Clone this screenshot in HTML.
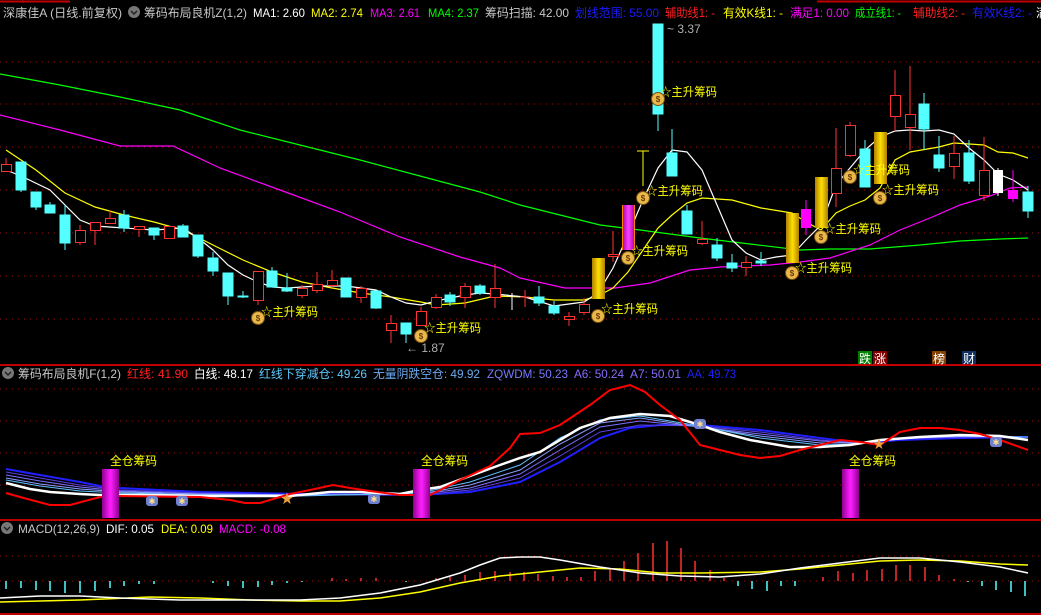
<!DOCTYPE html>
<html><head><meta charset="utf-8"><style>
html,body{margin:0;padding:0;background:#000;width:1041px;height:615px;overflow:hidden}
svg{display:block}
text{font-family:"Liberation Sans","Noto Sans CJK SC",sans-serif}
</style></head><body>
<svg width="1041" height="615" viewBox="0 0 1041 615" xmlns="http://www.w3.org/2000/svg">
<rect width="1041" height="615" fill="#000"/>
<line x1="0" y1="1.5" x2="70" y2="1.5" stroke="#c00000" stroke-width="2"/>
<line x1="23" y1="0" x2="23" y2="3" stroke="#c00000"/>
<line x1="817" y1="1.5" x2="1041" y2="1.5" stroke="#c00000" stroke-width="2"/>
<line x1="0" y1="365" x2="1041" y2="365" stroke="#c00000" stroke-width="2"/>
<line x1="0" y1="520" x2="1041" y2="520" stroke="#c00000" stroke-width="2"/>
<line x1="0" y1="614" x2="1041" y2="614" stroke="#c00000" stroke-width="2"/>
<g stroke="#a01010" stroke-dasharray="1,5" stroke-width="1">
<line x1="0" y1="62" x2="1041" y2="62"/><line x1="0" y1="104" x2="1041" y2="104"/>
<line x1="0" y1="147" x2="1041" y2="147"/><line x1="0" y1="190" x2="1041" y2="190"/>
<line x1="0" y1="233" x2="1041" y2="233"/><line x1="0" y1="276" x2="1041" y2="276"/>
<line x1="0" y1="319" x2="1041" y2="319"/>
<line x1="0" y1="389" x2="1041" y2="389"/><line x1="0" y1="421" x2="1041" y2="421"/>
<line x1="0" y1="453" x2="1041" y2="453"/><line x1="0" y1="485" x2="1041" y2="485"/>
<line x1="0" y1="556" x2="1041" y2="556"/><line x1="0" y1="581" x2="1041" y2="581"/>
</g>
<g font-size="12">
<text x="3" y="17" fill="#c8c8c8" textLength="119" lengthAdjust="spacingAndGlyphs">深康佳A (日线.前复权)</text>
<circle cx="134" cy="12" r="6" fill="#777"/><path d="M131 11 l3 3 l3 -3" stroke="#222" fill="none" stroke-width="1.5"/>
<text x="144" y="17" fill="#c8c8c8" textLength="103" lengthAdjust="spacingAndGlyphs">筹码布局良机Z(1,2)</text>
<text x="253" y="17" fill="#fff" textLength="52" lengthAdjust="spacingAndGlyphs">MA1: 2.60</text>
<text x="311" y="17" fill="#ffff00" textLength="52" lengthAdjust="spacingAndGlyphs">MA2: 2.74</text>
<text x="370" y="17" fill="#ff00ff" textLength="50" lengthAdjust="spacingAndGlyphs">MA3: 2.61</text>
<text x="428" y="17" fill="#00ff00" textLength="51" lengthAdjust="spacingAndGlyphs">MA4: 2.37</text>
<text x="485" y="17" fill="#c8c8c8" textLength="84" lengthAdjust="spacingAndGlyphs">筹码扫描: 42.00</text>
<text x="575" y="17" fill="#1c1cff" textLength="84" lengthAdjust="spacingAndGlyphs">划线范围: 55.00</text>
<text x="665" y="17" fill="#ff2020" textLength="50" lengthAdjust="spacingAndGlyphs">辅助线1: -</text>
<text x="723" y="17" fill="#ffff00" textLength="60" lengthAdjust="spacingAndGlyphs">有效K线1: -</text>
<text x="790" y="17" fill="#ff00ff" textLength="59" lengthAdjust="spacingAndGlyphs">满足1: 0.00</text>
<text x="855" y="17" fill="#00ff00" textLength="46" lengthAdjust="spacingAndGlyphs">成立线1: -</text>
<text x="913" y="17" fill="#ff2020" textLength="52" lengthAdjust="spacingAndGlyphs">辅助线2: -</text>
<text x="972" y="17" fill="#1c1cff" textLength="60" lengthAdjust="spacingAndGlyphs">有效K线2: -</text>
<text x="1036" y="17" fill="#fff">满</text>
</g>
<g font-size="12">
<circle cx="8" cy="373" r="6" fill="#777"/><path d="M5 372 l3 3 l3 -3" stroke="#222" fill="none" stroke-width="1.5"/>
<text x="18" y="378" fill="#c8c8c8" textLength="103" lengthAdjust="spacingAndGlyphs">筹码布局良机F(1,2)</text>
<text x="127" y="378" fill="#ff2020" textLength="61" lengthAdjust="spacingAndGlyphs">红线: 41.90</text>
<text x="194" y="378" fill="#fff" textLength="59" lengthAdjust="spacingAndGlyphs">白线: 48.17</text>
<text x="259" y="378" fill="#5fc8ff" textLength="108" lengthAdjust="spacingAndGlyphs">红线下穿减仓: 49.26</text>
<text x="373" y="378" fill="#6aaaf0" textLength="107" lengthAdjust="spacingAndGlyphs">无量阴跌空仓: 49.92</text>
<text x="487" y="378" fill="#7878ff" textLength="81" lengthAdjust="spacingAndGlyphs">ZQWDM: 50.23</text>
<text x="574" y="378" fill="#8a6cff" textLength="50" lengthAdjust="spacingAndGlyphs">A6: 50.24</text>
<text x="630" y="378" fill="#8a6cff" textLength="51" lengthAdjust="spacingAndGlyphs">A7: 50.01</text>
<text x="687" y="378" fill="#2020ff" textLength="49" lengthAdjust="spacingAndGlyphs">AA: 49.73</text>
</g>
<g font-size="12">
<circle cx="7" cy="528" r="6" fill="#777"/><path d="M4 527 l3 3 l3 -3" stroke="#222" fill="none" stroke-width="1.5"/>
<text x="18" y="533" fill="#c8c8c8" textLength="82" lengthAdjust="spacingAndGlyphs">MACD(12,26,9)</text>
<text x="106" y="533" fill="#fff" textLength="48" lengthAdjust="spacingAndGlyphs">DIF: 0.05</text>
<text x="161" y="533" fill="#ffff00" textLength="52" lengthAdjust="spacingAndGlyphs">DEA: 0.09</text>
<text x="219" y="533" fill="#ff00ff" textLength="67" lengthAdjust="spacingAndGlyphs">MACD: -0.08</text>
</g>

<g fill="none" stroke-width="1.2">
<polyline stroke="#00ff00" points="0,74 60,85 120,97 180,110 240,130 300,145 360,160 420,176 480,192 520,205 560,215 600,225 640,230 700,238 750,244 800,250 830,249 870,249 920,245 960,241 1000,239 1028,238"/>
<polyline stroke="#ff00ff" points="0,115 60,130 120,146 173,146 220,168 280,190 340,212 400,237 460,257 500,268 520,278 565,288 615,288 650,283 690,270 720,267 770,265 800,262 830,258 870,245 900,230 930,218 960,205 990,196 1010,188 1028,187"/>
<polyline stroke="#ffff00" points="6,150 36,170 65,193 95,207 124,215 154,222 183,230 213,245 243,260 272,272 302,282 332,288 361,293 391,297 421,302 436,305 465,303 495,296 525,297 554,300 584,300 598,296 613,288 628,272 643,250 658,228 672,215 687,203 702,198 732,200 761,208 792,213 806,222 821,230 836,213 850,206 865,200 880,188 895,160 910,152 939,147 954,143 984,145 998,152 1013,153 1028,158"/>
<polyline stroke="#ffffff" points="6,170 21,176 50,190 80,220 95,226 124,228 154,230 183,228 198,238 213,250 228,265 243,275 258,282 272,287 287,288 317,286 346,286 376,290 391,297 406,303 421,305 436,301 465,295 480,293 495,294 525,297 554,306 584,302 598,293 613,268 628,235 643,200 658,168 672,150 687,152 702,170 717,205 732,240 746,253 761,260 776,257 792,255 806,240 821,225 836,185 850,168 865,150 880,137 895,131 910,130 924,131 939,130 954,134 969,148 984,160 998,174 1013,180 1028,190"/>
</g>

<defs>
<linearGradient id="gold" x1="0" x2="1"><stop offset="0" stop-color="#b08000"/><stop offset=".5" stop-color="#ffe000"/><stop offset="1" stop-color="#b08000"/></linearGradient>
<linearGradient id="mag" x1="0" x2="1"><stop offset="0" stop-color="#a000a0"/><stop offset=".5" stop-color="#ff40ff"/><stop offset="1" stop-color="#a000a0"/></linearGradient>
</defs>
<g stroke-width="1">
<g stroke="#54ffff" fill="#54ffff">
<line x1="21" y1="162" x2="21" y2="192"/><rect x="16" y="162" width="10" height="28"/>
<line x1="36" y1="192" x2="36" y2="210"/><rect x="31" y="192" width="10" height="15"/>
<line x1="50" y1="202" x2="50" y2="213"/><rect x="45" y="205" width="10" height="8"/>
<line x1="65" y1="205" x2="65" y2="250"/><rect x="60" y="215" width="10" height="28"/>
<line x1="124" y1="210" x2="124" y2="232"/><rect x="119" y="215" width="10" height="13"/>
<line x1="154" y1="228" x2="154" y2="240"/><rect x="149" y="228" width="10" height="7"/>
<line x1="183" y1="224" x2="183" y2="237"/><rect x="178" y="226" width="10" height="11"/>
<line x1="198" y1="235" x2="198" y2="258"/><rect x="193" y="235" width="10" height="21"/>
<line x1="213" y1="252" x2="213" y2="276"/><rect x="208" y="258" width="10" height="13"/>
<line x1="228" y1="273" x2="228" y2="305"/><rect x="223" y="273" width="10" height="23"/>
<line x1="243" y1="291" x2="243" y2="298"/><rect x="238" y="296" width="10" height="1"/>
<line x1="272" y1="267" x2="272" y2="287"/><rect x="267" y="271" width="10" height="16"/>
<line x1="287" y1="273" x2="287" y2="292"/><rect x="282" y="288" width="10" height="3"/>
<line x1="346" y1="278" x2="346" y2="297"/><rect x="341" y="278" width="10" height="19"/>
<line x1="376" y1="291" x2="376" y2="309"/><rect x="371" y="291" width="10" height="17"/>
<line x1="406" y1="323" x2="406" y2="343"/><rect x="401" y="323" width="10" height="11"/>
<line x1="450" y1="292" x2="450" y2="306"/><rect x="445" y="295" width="10" height="7"/>
<line x1="480" y1="284" x2="480" y2="295"/><rect x="475" y="286" width="10" height="7"/>
<line x1="539" y1="286" x2="539" y2="306"/><rect x="534" y="297" width="10" height="6"/>
<line x1="554" y1="301" x2="554" y2="315"/><rect x="549" y="306" width="10" height="7"/>
<line x1="658" y1="24" x2="658" y2="131"/><rect x="653" y="24" width="10" height="90"/>
<line x1="672" y1="129" x2="672" y2="176"/><rect x="667" y="153" width="10" height="23"/>
<line x1="687" y1="205" x2="687" y2="234"/><rect x="682" y="211" width="10" height="23"/>
<line x1="717" y1="238" x2="717" y2="261"/><rect x="712" y="245" width="10" height="13"/>
<line x1="732" y1="254" x2="732" y2="272"/><rect x="727" y="263" width="10" height="5"/>
<line x1="761" y1="252" x2="761" y2="266"/><rect x="756" y="261" width="10" height="2"/>
<line x1="865" y1="140" x2="865" y2="187"/><rect x="860" y="149" width="10" height="38"/>
<line x1="924" y1="93" x2="924" y2="150"/><rect x="919" y="104" width="10" height="25"/>
<line x1="939" y1="136" x2="939" y2="172"/><rect x="934" y="155" width="10" height="13"/>
<line x1="969" y1="140" x2="969" y2="184"/><rect x="964" y="153" width="10" height="28"/>
<line x1="1028" y1="186" x2="1028" y2="218"/><rect x="1023" y="192" width="10" height="19"/>
</g>
<g stroke="#ff3232" fill="#000">
<line x1="6" y1="158" x2="6" y2="172"/><rect x="1.5" y="164.5" width="10" height="7"/>
<line x1="80" y1="225" x2="80" y2="245"/><rect x="75.5" y="230.5" width="10" height="12"/>
<line x1="95" y1="222" x2="95" y2="245"/><rect x="90.5" y="222.5" width="10" height="8"/>
<line x1="110" y1="210" x2="110" y2="223"/><rect x="105.5" y="218.5" width="10" height="5"/>
<line x1="139" y1="226" x2="139" y2="237"/><rect x="134.5" y="226.5" width="10" height="3"/>
<line x1="169" y1="226" x2="169" y2="238"/><rect x="164.5" y="226.5" width="10" height="12"/>
<line x1="258" y1="271" x2="258" y2="305"/><rect x="253.5" y="271.5" width="10" height="29"/>
<line x1="302" y1="285" x2="302" y2="298"/><rect x="297.5" y="288.5" width="10" height="7"/>
<line x1="317" y1="272" x2="317" y2="293"/><rect x="312.5" y="284.5" width="10" height="6"/>
<line x1="332" y1="270" x2="332" y2="287"/><rect x="327.5" y="280.5" width="10" height="5"/>
<line x1="361" y1="286" x2="361" y2="303"/><rect x="356.5" y="288.5" width="10" height="9"/>
<line x1="391" y1="315" x2="391" y2="343"/><rect x="386.5" y="323.5" width="10" height="7"/>
<line x1="421" y1="307" x2="421" y2="325"/><rect x="416.5" y="311.5" width="10" height="14"/>
<line x1="436" y1="294" x2="436" y2="309"/><rect x="431.5" y="297.5" width="10" height="10"/>
<line x1="465" y1="283" x2="465" y2="308"/><rect x="460.5" y="286.5" width="10" height="11"/>
<line x1="495" y1="264" x2="495" y2="308"/><rect x="490.5" y="288.5" width="10" height="9"/>
<line x1="569" y1="312" x2="569" y2="326"/><rect x="564.5" y="316.5" width="10" height="3"/>
<line x1="584" y1="298" x2="584" y2="315"/><rect x="579.5" y="304.5" width="10" height="8"/>
<line x1="613" y1="231" x2="613" y2="262"/><rect x="608.5" y="254.5" width="10" height="2"/>
<line x1="702" y1="221" x2="702" y2="245"/><rect x="697.5" y="239.5" width="10" height="4"/>
<line x1="746" y1="256" x2="746" y2="276"/><rect x="741.5" y="262.5" width="10" height="5"/>
<line x1="836" y1="128" x2="836" y2="207"/><rect x="831.5" y="168.5" width="10" height="25"/>
<line x1="850" y1="122" x2="850" y2="157"/><rect x="845.5" y="125.5" width="10" height="30"/>
<line x1="895" y1="70" x2="895" y2="131"/><rect x="890.5" y="95.5" width="10" height="21"/>
<line x1="910" y1="66" x2="910" y2="150"/><rect x="905.5" y="114.5" width="10" height="13"/>
<line x1="954" y1="136" x2="954" y2="179"/><rect x="949.5" y="153.5" width="10" height="13"/>
<line x1="984" y1="137" x2="984" y2="201"/><rect x="979.5" y="170.5" width="10" height="25"/>
</g>
<g stroke="#ff3232"><line x1="525" y1="290" x2="525" y2="307"/><line x1="520" y1="297" x2="530" y2="297"/></g>
<g stroke="#fff"><line x1="512" y1="293" x2="512" y2="310"/><line x1="507" y1="296" x2="517" y2="296"/></g>
<g stroke="#ffff00"><line x1="643" y1="151" x2="643" y2="186"/><line x1="637" y1="151" x2="649" y2="151"/></g>
<rect x="592" y="258" width="13" height="41" fill="url(#gold)"/>
<rect x="622" y="205" width="13" height="45" fill="url(#mag)"/>
<rect x="622" y="205" width="1" height="45" fill="#ff8000"/><rect x="634" y="205" width="1" height="45" fill="#ff8000"/>
<rect x="786" y="213" width="13" height="50" fill="url(#gold)"/>
<line x1="806" y1="200" x2="806" y2="235" stroke="#ff00ff"/><rect x="801" y="209" width="10" height="19" fill="#ff00ff"/>
<rect x="815" y="177" width="13" height="51" fill="url(#gold)"/>
<rect x="874" y="132" width="13" height="52" fill="url(#gold)"/>
<line x1="998" y1="168" x2="998" y2="196" stroke="#fff"/><rect x="993" y="170" width="10" height="23" fill="#fff"/>
<line x1="1013" y1="170" x2="1013" y2="202" stroke="#ff00ff"/><rect x="1008" y="190" width="10" height="9" fill="#ff00ff"/>
</g>
<text x="667" y="33" font-size="12" fill="#b0b0b0">~ 3.37</text>
<text x="406" y="352" font-size="12" fill="#b0b0b0">← 1.87</text>

<g font-size="12" fill="#ffff00">
<text x="261" y="316" textLength="57" lengthAdjust="spacingAndGlyphs">☆主升筹码</text>
<text x="424" y="332" textLength="57" lengthAdjust="spacingAndGlyphs">☆主升筹码</text>
<text x="601" y="313" textLength="57" lengthAdjust="spacingAndGlyphs">☆主升筹码</text>
<text x="631" y="255" textLength="57" lengthAdjust="spacingAndGlyphs">☆主升筹码</text>
<text x="646" y="195" textLength="57" lengthAdjust="spacingAndGlyphs">☆主升筹码</text>
<text x="660" y="96" textLength="57" lengthAdjust="spacingAndGlyphs">☆主升筹码</text>
<text x="795" y="272" textLength="57" lengthAdjust="spacingAndGlyphs">☆主升筹码</text>
<text x="824" y="233" textLength="57" lengthAdjust="spacingAndGlyphs">☆主升筹码</text>
<text x="853" y="174" textLength="57" lengthAdjust="spacingAndGlyphs">☆主升筹码</text>
<text x="882" y="194" textLength="57" lengthAdjust="spacingAndGlyphs">☆主升筹码</text>
</g>
<g font-size="8" font-weight="bold" text-anchor="middle">
<g><circle cx="258" cy="318" r="6.5" fill="#e8b84a" stroke="#7a5010"/><text x="258" y="321" fill="#6a3a00">$</text></g>
<g><circle cx="421" cy="336" r="6.5" fill="#e8b84a" stroke="#7a5010"/><text x="421" y="339" fill="#6a3a00">$</text></g>
<g><circle cx="598" cy="316" r="6.5" fill="#e8b84a" stroke="#7a5010"/><text x="598" y="319" fill="#6a3a00">$</text></g>
<g><circle cx="628" cy="258" r="6.5" fill="#e8b84a" stroke="#7a5010"/><text x="628" y="261" fill="#6a3a00">$</text></g>
<g><circle cx="643" cy="198" r="6.5" fill="#e8b84a" stroke="#7a5010"/><text x="643" y="201" fill="#6a3a00">$</text></g>
<g><circle cx="658" cy="99" r="6.5" fill="#e8b84a" stroke="#7a5010"/><text x="658" y="102" fill="#6a3a00">$</text></g>
<g><circle cx="792" cy="273" r="6.5" fill="#e8b84a" stroke="#7a5010"/><text x="792" y="276" fill="#6a3a00">$</text></g>
<g><circle cx="821" cy="237" r="6.5" fill="#e8b84a" stroke="#7a5010"/><text x="821" y="240" fill="#6a3a00">$</text></g>
<g><circle cx="850" cy="177" r="6.5" fill="#e8b84a" stroke="#7a5010"/><text x="850" y="180" fill="#6a3a00">$</text></g>
<g><circle cx="880" cy="198" r="6.5" fill="#e8b84a" stroke="#7a5010"/><text x="880" y="201" fill="#6a3a00">$</text></g>
</g>
<g font-size="12" fill="#fff">
<rect x="858" y="351" width="14" height="13" fill="#008000"/><text x="859" y="363">跌</text>
<rect x="873" y="351" width="14" height="13" fill="#800000"/><text x="874" y="363">涨</text>
<rect x="932" y="351" width="14" height="13" fill="#804000"/><text x="933" y="363">榜</text>
<rect x="962" y="351" width="14" height="13" fill="#103060"/><text x="963" y="363">财</text>
</g>

<g fill="none">
<polyline stroke="#2020ff" stroke-width="2" points="6,469 40,475 80,482 100,486 120,488 200,492 300,494 420,495 470,492 520,482 560,462 600,438 630,428 660,425 700,425 760,430 820,438 860,443 900,440 960,438 1028,437"/>
<polyline stroke="#5a40e0" stroke-width="1" points="6,472 40,478 80,485 120,490 200,493 300,495 420,495 470,490 520,478 560,456 600,432 640,425 700,426 760,432 820,440 860,443 900,439 960,437 1028,437"/>
<polyline stroke="#7a70ff" stroke-width="1" points="6,475 40,481 80,487 120,491 200,494 300,495 420,494 470,488 520,474 560,450 600,427 640,421 700,427 760,434 820,441 860,443 900,438 960,437 1028,437"/>
<polyline stroke="#8aa0ff" stroke-width="1" points="6,478 40,484 80,489 120,492 200,494 300,495 420,494 470,485 520,470 560,444 600,423 640,418 700,427 760,436 820,443 860,443 900,438 960,436 1028,437"/>
<polyline stroke="#60c0ff" stroke-width="1" points="6,480 40,486 80,491 120,493 200,495 300,496 420,493 470,482 520,465 560,438 600,420 640,416 700,426 760,438 820,445 860,444 900,438 960,436 1028,437"/>
<polyline stroke="#ffffff" stroke-width="2.5" points="6,483 30,489 50,492 80,494 100,495 150,495 200,496 250,496 290,496 330,492 360,492 400,494 420,490 440,487 470,476 500,465 520,458 540,452 580,428 610,418 640,414 670,416 700,425 720,432 750,440 790,447 820,447 850,445 880,440 920,437 960,435 1000,436 1028,440"/>
<polyline stroke="#ff0000" stroke-width="2" points="6,493 20,497 50,505 70,505 100,497 120,496 200,497 230,500 245,503 260,503 290,494 310,490 333,485 350,488 370,491 400,495 430,495 460,480 490,466 510,448 520,434 540,433 560,425 590,405 610,390 630,385 645,392 660,405 680,420 700,445 720,450 740,455 760,458 780,456 800,450 820,445 840,440 860,442 880,445 900,432 920,428 940,428 960,430 980,434 1000,440 1028,450"/>
</g>
<defs><linearGradient id="mag2" x1="0" x2="1"><stop offset="0" stop-color="#900090"/><stop offset=".5" stop-color="#ff20ff"/><stop offset="1" stop-color="#900090"/></linearGradient></defs>
<rect x="102" y="469" width="17" height="49" fill="url(#mag2)"/>
<rect x="413" y="469" width="17" height="49" fill="url(#mag2)"/>
<rect x="842" y="469" width="17" height="49" fill="url(#mag2)"/>
<g font-size="12" fill="#ffff00">
<text x="110" y="465" textLength="47" lengthAdjust="spacingAndGlyphs">全仓筹码</text>
<text x="421" y="465" textLength="47" lengthAdjust="spacingAndGlyphs">全仓筹码</text>
<text x="849" y="465" textLength="47" lengthAdjust="spacingAndGlyphs">全仓筹码</text>
</g>
<g fill="#7080d0">
<rect x="146" y="496" width="12" height="10" rx="3"/><rect x="176" y="496" width="12" height="10" rx="3"/>
<rect x="368" y="494" width="12" height="10" rx="3"/><rect x="694" y="419" width="12" height="10" rx="3"/>
<rect x="990" y="437" width="12" height="10" rx="3"/>
</g>
<g fill="#ffe080" font-size="8" text-anchor="middle">
<text x="152" y="504">✱</text><text x="182" y="504">✱</text><text x="374" y="502">✱</text><text x="700" y="427">✱</text><text x="996" y="445">✱</text>
</g>
<text x="287" y="503" font-size="13" fill="#f0a040" text-anchor="middle">★</text>
<text x="879" y="448" font-size="12" fill="#f0a040" text-anchor="middle">★</text>

<g stroke="#54ffff" stroke-width="1.5">
<line x1="6" y1="581" x2="6" y2="589"/><line x1="21" y1="581" x2="21" y2="588"/><line x1="36" y1="581" x2="36" y2="590"/><line x1="50" y1="581" x2="50" y2="591"/><line x1="65" y1="581" x2="65" y2="593"/><line x1="80" y1="581" x2="80" y2="593"/><line x1="95" y1="581" x2="95" y2="591"/><line x1="110" y1="581" x2="110" y2="588"/><line x1="124" y1="581" x2="124" y2="586"/><line x1="139" y1="581" x2="139" y2="584"/><line x1="154" y1="581" x2="154" y2="584"/>
<line x1="213" y1="581" x2="213" y2="583"/><line x1="228" y1="581" x2="228" y2="586"/><line x1="243" y1="581" x2="243" y2="588"/><line x1="258" y1="581" x2="258" y2="587"/><line x1="272" y1="581" x2="272" y2="585"/><line x1="287" y1="581" x2="287" y2="583"/><line x1="302" y1="581" x2="302" y2="582"/><line x1="406" y1="581" x2="406" y2="582"/>
<line x1="738" y1="581" x2="738" y2="586"/><line x1="752" y1="581" x2="752" y2="589"/><line x1="767" y1="581" x2="767" y2="591"/><line x1="781" y1="581" x2="781" y2="586"/><line x1="795" y1="581" x2="795" y2="586"/>
<line x1="968" y1="581" x2="968" y2="582"/><line x1="982" y1="581" x2="982" y2="586"/><line x1="996" y1="581" x2="996" y2="590"/><line x1="1011" y1="581" x2="1011" y2="592"/><line x1="1025" y1="581" x2="1025" y2="596"/>
</g>
<g stroke="#ff3030" stroke-width="1.5">
<line x1="332" y1="581" x2="332" y2="578"/><line x1="346" y1="581" x2="346" y2="579"/><line x1="361" y1="581" x2="361" y2="578"/><line x1="376" y1="581" x2="376" y2="578"/>
<line x1="436" y1="581" x2="436" y2="578"/><line x1="450" y1="581" x2="450" y2="577"/><line x1="465" y1="581" x2="465" y2="575"/><line x1="480" y1="581" x2="480" y2="572"/><line x1="495" y1="581" x2="495" y2="571"/>
<line x1="510" y1="581" x2="510" y2="572"/><line x1="524" y1="581" x2="524" y2="572"/><line x1="538" y1="581" x2="538" y2="574"/><line x1="553" y1="581" x2="553" y2="576"/><line x1="567" y1="581" x2="567" y2="577"/><line x1="581" y1="581" x2="581" y2="577"/><line x1="595" y1="581" x2="595" y2="571"/><line x1="610" y1="581" x2="610" y2="568"/><line x1="624" y1="581" x2="624" y2="561"/><line x1="638" y1="581" x2="638" y2="553"/><line x1="653" y1="581" x2="653" y2="543"/><line x1="667" y1="581" x2="667" y2="541"/><line x1="681" y1="581" x2="681" y2="548"/><line x1="695" y1="581" x2="695" y2="561"/><line x1="710" y1="581" x2="710" y2="570"/><line x1="724" y1="581" x2="724" y2="578"/>
<line x1="823" y1="581" x2="823" y2="577"/><line x1="838" y1="581" x2="838" y2="571"/><line x1="853" y1="581" x2="853" y2="573"/><line x1="867" y1="581" x2="867" y2="570"/><line x1="882" y1="581" x2="882" y2="569"/><line x1="896" y1="581" x2="896" y2="565"/><line x1="910" y1="581" x2="910" y2="565"/><line x1="925" y1="581" x2="925" y2="567"/><line x1="939" y1="581" x2="939" y2="575"/><line x1="954" y1="581" x2="954" y2="579"/>
</g>
<g fill="none" stroke-width="1.5">
<polyline stroke="#ffff00" points="0,602 40,601 80,600 150,597 200,598 250,600 300,601 340,601 380,598 420,592 460,583 500,576 540,572 580,568 620,569 660,573 700,573 760,572 800,569 840,565 880,561 920,560 960,561 1000,564 1028,565"/>
<polyline stroke="#ffffff" points="0,598 40,596 80,596 120,598 180,600 240,600 300,600 340,598 380,593 420,585 460,573 480,565 500,558 520,557 540,557 560,560 600,567 640,573 680,576 720,577 760,574 800,568 840,563 880,558 920,558 960,562 1000,567 1028,573"/>
</g>
</svg>
</body></html>
